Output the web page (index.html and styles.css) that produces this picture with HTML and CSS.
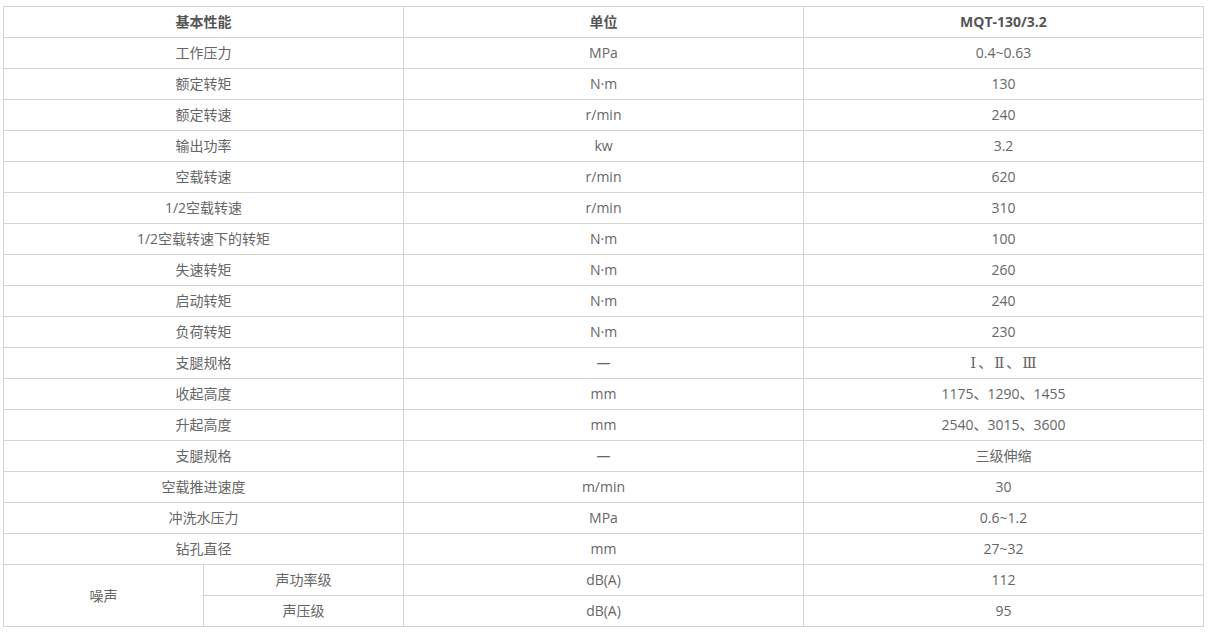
FILE: index.html
```html
<!DOCTYPE html>
<html lang="zh-CN">
<head>
<meta charset="utf-8">
<title>MQT-130/3.2</title>
<link rel="stylesheet" href="styles.css">
</head>
<body>
<div class="wrap">
<table class="spec">
<colgroup>
<col class="c1"><col class="c2"><col class="c3"><col class="c4">
</colgroup>
<thead>
<tr><th colspan="2">基本性能</th><th>单位</th><th>MQT-130/3.2</th></tr>
</thead>
<tbody>
<tr><td colspan="2">工作压力</td><td>MPa</td><td>0.4~0.63</td></tr>
<tr><td colspan="2">额定转矩</td><td>N·m</td><td>130</td></tr>
<tr><td colspan="2">额定转速</td><td>r/min</td><td>240</td></tr>
<tr><td colspan="2">输出功率</td><td>kw</td><td>3.2</td></tr>
<tr><td colspan="2">空载转速</td><td>r/min</td><td>620</td></tr>
<tr><td colspan="2">1/2空载转速</td><td>r/min</td><td>310</td></tr>
<tr><td colspan="2">1/2空载转速下的转矩</td><td>N·m</td><td>100</td></tr>
<tr><td colspan="2">失速转矩</td><td>N·m</td><td>260</td></tr>
<tr><td colspan="2">启动转矩</td><td>N·m</td><td>240</td></tr>
<tr><td colspan="2">负荷转矩</td><td>N·m</td><td>230</td></tr>
<tr><td colspan="2">支腿规格</td><td>—</td><td><span class="roman">Ⅰ</span>、<span class="roman">Ⅱ</span>、<span class="roman">Ⅲ</span></td></tr>
<tr><td colspan="2">收起高度</td><td>mm</td><td>1175、1290、1455</td></tr>
<tr><td colspan="2">升起高度</td><td>mm</td><td>2540、3015、3600</td></tr>
<tr><td colspan="2">支腿规格</td><td>—</td><td>三级伸缩</td></tr>
<tr><td colspan="2">空载推进速度</td><td>m/min</td><td>30</td></tr>
<tr><td colspan="2">冲洗水压力</td><td>MPa</td><td>0.6~1.2</td></tr>
<tr><td colspan="2">钻孔直径</td><td>mm</td><td>27~32</td></tr>
<tr><td rowspan="2">噪声</td><td>声功率级</td><td>dB(A)</td><td>112</td></tr>
<tr><td>声压级</td><td>dB(A)</td><td>95</td></tr>
</tbody>
</table>
</div>
</body>
</html>
```
FILE: styles.css
```css
html, body {
  margin: 0;
  padding: 0;
  background: #fff;
}
.wrap {
  padding: 6px 0 0 3px;
}
.spec {
  border-collapse: collapse;
  table-layout: fixed;
  width: 1200px;
  font-family: "Open Sans", "Noto Sans CJK SC", sans-serif;
  font-size: 14px;
  color: #666;
}
.spec .c1 { width: 200px; }
.spec .c2 { width: 200px; }
.spec .c3 { width: 400px; }
.spec .c4 { width: 400px; }
.spec th,
.spec td {
  border: 1px solid #d4d4d4;
  height: 30px;
  padding: 0;
  line-height: 30px;
  text-align: center;
  vertical-align: middle;
  white-space: nowrap;
}
.spec th {
  font-weight: bold;
  color: #555;
}
.roman {
  font-family: "DejaVu Serif", "Liberation Serif", serif;
  font-size: 15px;
  padding: 0 2px;
}
```
